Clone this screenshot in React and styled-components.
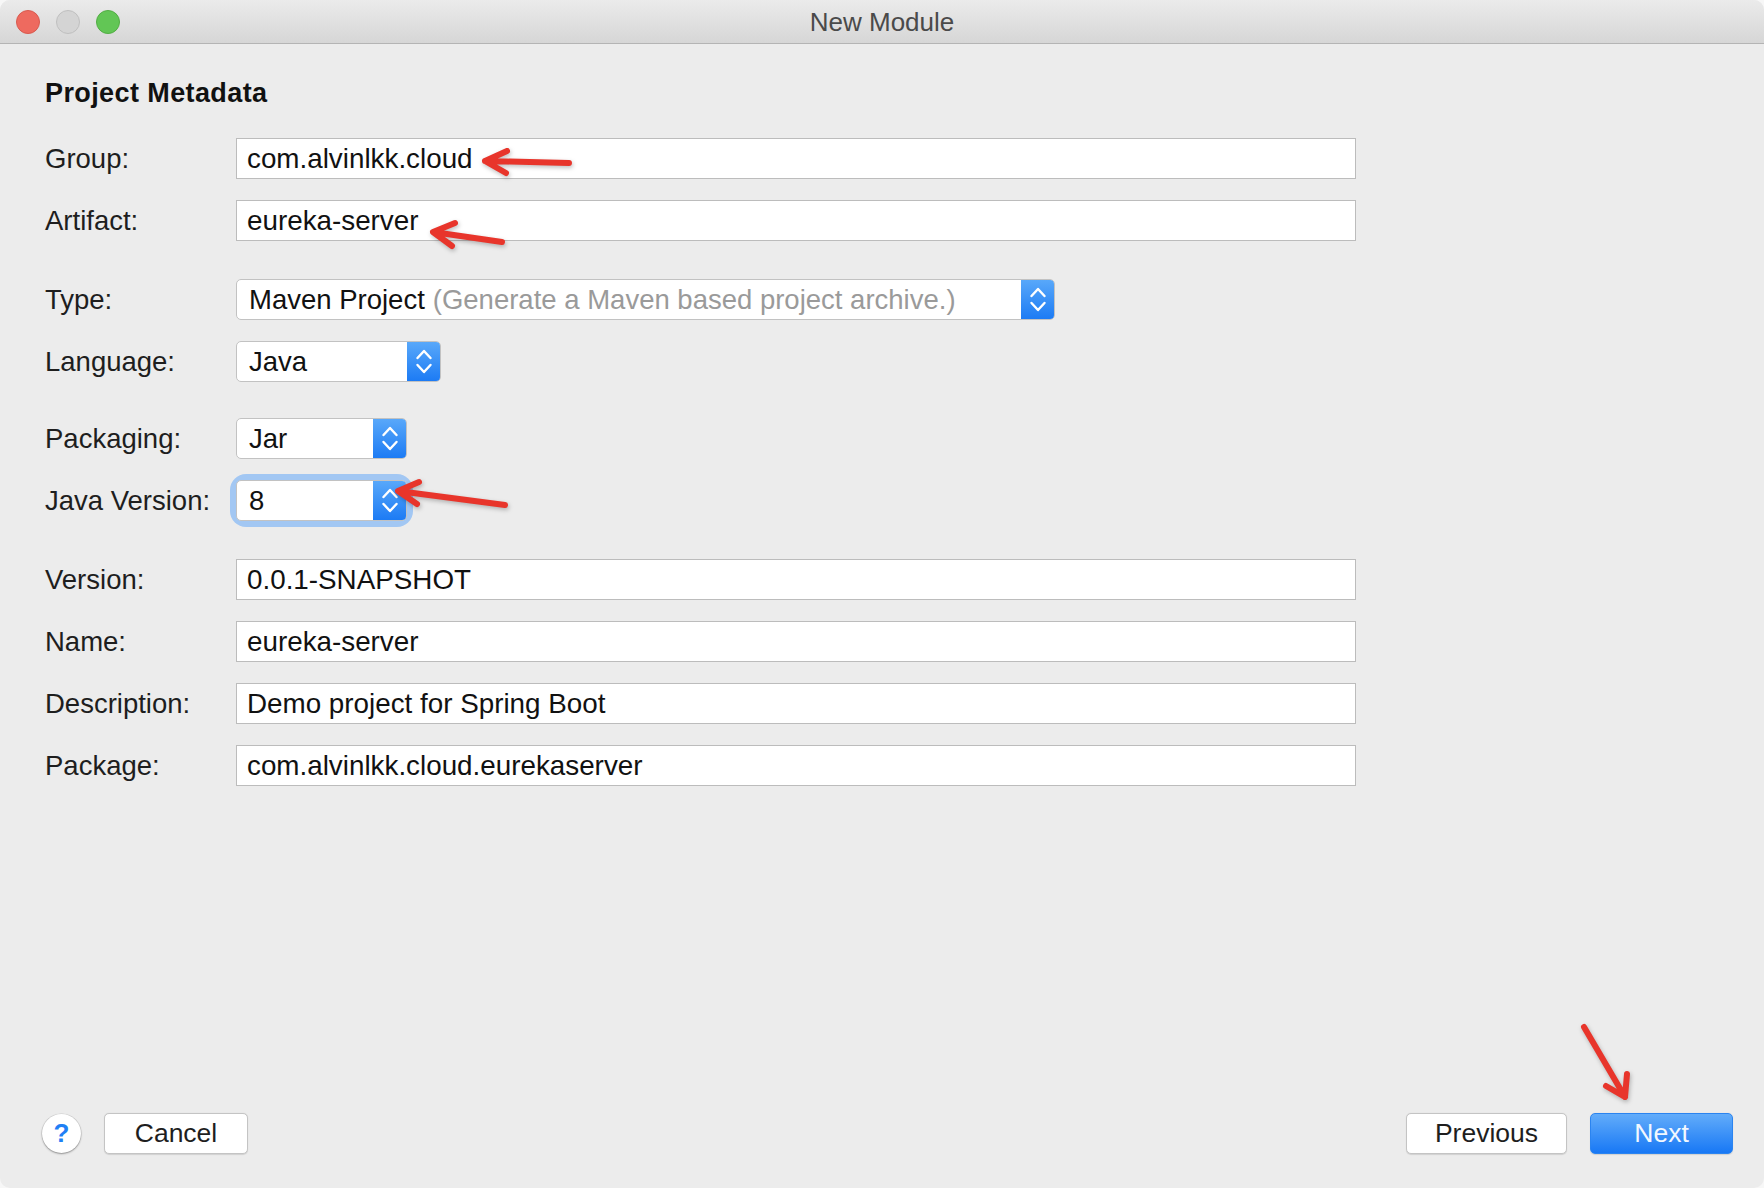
import React from "react";
import styled, { createGlobalStyle } from "styled-components";

const Global = createGlobalStyle`
  html, body, #root { margin: 0; padding: 0; height: 100%; }
  body { background: #f7f7f7; font-family: "Liberation Sans", Arial, sans-serif; overflow: hidden; }
  * { box-sizing: border-box; }
`;

const Window = styled.div`
  position: relative;
  width: 1764px;
  height: 1188px;
  background: #ececec;
  border-radius: 10px;
  overflow: hidden;
  display: flex;
  flex-direction: column;
`;

const TitleBar = styled.div`
  height: 44px;
  flex: 0 0 44px;
  background: linear-gradient(#ebebeb, #d6d6d6);
  border-bottom: 1px solid #b4b4b4;
  display: flex;
  align-items: center;
  position: relative;
  padding-left: 16px;
  gap: 16px;
`;

const Light = styled.span`
  width: 24px;
  height: 24px;
  border-radius: 50%;
  background: ${(p) => p.$bg};
  border: 1px solid ${(p) => p.$border};
`;

const Title = styled.div`
  position: absolute;
  left: 0;
  right: 0;
  top: 0;
  height: 45px;
  display: flex;
  align-items: center;
  justify-content: center;
  font-size: 26px;
  color: #4a4a4a;
  pointer-events: none;
`;

const Content = styled.div`
  flex: 1;
  padding: 32px 0 0 45px;
  display: flex;
  flex-direction: column;
`;

const Heading = styled.h1`
  margin: 0;
  font-size: 27px;
  letter-spacing: 0.4px;
  line-height: 34px;
  font-weight: 700;
  color: #111;
`;

const Form = styled.div`
  margin-top: 28px;
  display: flex;
  flex-direction: column;
`;

const Row = styled.div`
  display: grid;
  grid-template-columns: 191px 1fr;
  align-items: center;
  height: 41px;
  margin-top: ${(p) => (p.$first ? 0 : p.$group ? p.$group : 21)}px;
`;

const Label = styled.label`
  font-size: 27.5px;
  color: #1e1e1e;
  white-space: nowrap;
`;

const TextInput = styled.div`
  width: 1120px;
  height: 41px;
  background: #fff;
  border: 1px solid #bcbcbc;
  display: flex;
  align-items: center;
  padding-left: 10px;
  font-size: 27.8px;
  color: #111;
`;

const SelectWrap = styled.div`
  width: ${(p) => p.$width}px;
  height: 41px;
  border-radius: 10px;
  ${(p) => (p.$focus ? "box-shadow: 0 0 0 6px #a2c7f3;" : "")}
`;

const SelectBox = styled.div`
  width: 100%;
  height: 100%;
  display: flex;
  background: #fff;
  border: 1px solid #c2c2c2;
  border-radius: 5px;
  overflow: hidden;
`;

const SelectValue = styled.div`
  flex: 1;
  display: flex;
  align-items: center;
  padding-left: 12px;
  font-size: 27.5px;
  color: #111;
  white-space: nowrap;
  overflow: hidden;
`;

const Hint = styled.span`
  color: #9a9a9a;
  margin-left: 8px;
`;

const SelectButton = styled.div`
  width: 34px;
  flex: 0 0 34px;
  margin: -1px -1px -1px 0;
  background: linear-gradient(#5aa9fa, #1b7af4);
  display: flex;
  align-items: center;
  justify-content: center;
`;

const Footer = styled.div`
  display: flex;
  align-items: center;
  padding: 0 31px 34px 42px;
  height: 75px;
`;

const HelpButton = styled.div`
  width: 39px;
  height: 39px;
  border-radius: 50%;
  background: #fff;
  box-shadow: 0 1px 2px rgba(0, 0, 0, 0.35), 0 0 0 0.5px rgba(0, 0, 0, 0.12);
  display: flex;
  align-items: center;
  justify-content: center;
  color: #1f80f5;
  font-weight: 700;
  font-size: 26px;
`;

const Button = styled.div`
  width: ${(p) => p.$width}px;
  height: 41px;
  margin-left: ${(p) => p.$ml || 0}px;
  border-radius: 5px;
  display: flex;
  align-items: center;
  justify-content: center;
  font-size: 26.5px;
  color: ${(p) => (p.$primary ? "#f2f8ff" : "#1e1e1e")};
  background: ${(p) =>
    p.$primary ? "linear-gradient(#62acfa, #1878f5)" : "#ffffff"};
  border: 1px solid ${(p) => (p.$primary ? "#2b84f0" : "#c4c4c4")};
  box-shadow: 0 0.5px 1px rgba(0, 0, 0, 0.12);
`;

const Spacer = styled.div`
  flex: 1;
`;

const Overlay = styled.svg`
  position: absolute;
  left: 0;
  top: 0;
  pointer-events: none;
  filter: drop-shadow(1px 2px 2px rgba(0, 0, 0, 0.25));
`;

const Chevrons = () => (
  <svg width="34" height="41" viewBox="0 0 34 41">
    <path
      d="M10.5 17 L17 10 L23.5 17 M10.5 24 L17 31 L23.5 24"
      fill="none"
      stroke="#fff"
      strokeWidth="2.4"
      strokeLinecap="round"
      strokeLinejoin="round"
    />
  </svg>
);

const Select = ({ width, value, hint, focus }) => (
  <SelectWrap $width={width} $focus={focus}>
    <SelectBox>
      <SelectValue>
        {value}
        {hint && <Hint>{hint}</Hint>}
      </SelectValue>
      <SelectButton>
        <Chevrons />
      </SelectButton>
    </SelectBox>
  </SelectWrap>
);

const arrows = [
  "M569 163 L485 161 M507 151 L485 161 L506 173",
  "M502 242 L433 232 M455 223 L433 232 L452 246",
  "M505 505 L398 491 M419 482 L398 491 L417 504",
  "M1584 1027 L1625 1097 M1606 1086 L1625 1097 L1627 1074",
];

export default function App() {
  return (
    <>
      <Global />
      <Window>
        <TitleBar>
          <Light $bg="#ee6a5f" $border="#d85a4f" />
          <Light $bg="#d4d4d4" $border="#bfbfbf" />
          <Light $bg="#62c655" $border="#52ad44" />
          <Title>New Module</Title>
        </TitleBar>
        <Content>
          <Heading>Project Metadata</Heading>
          <Form>
            <Row $first>
              <Label>Group:</Label>
              <TextInput>com.alvinlkk.cloud</TextInput>
            </Row>
            <Row>
              <Label>Artifact:</Label>
              <TextInput>eureka-server</TextInput>
            </Row>
            <Row $group={38}>
              <Label>Type:</Label>
              <Select
                width={819}
                value="Maven Project"
                hint="(Generate a Maven based project archive.)"
              />
            </Row>
            <Row>
              <Label>Language:</Label>
              <Select width={205} value="Java" />
            </Row>
            <Row $group={36}>
              <Label>Packaging:</Label>
              <Select width={171} value="Jar" />
            </Row>
            <Row>
              <Label>Java Version:</Label>
              <Select width={171} value="8" focus />
            </Row>
            <Row $group={38}>
              <Label>Version:</Label>
              <TextInput>0.0.1-SNAPSHOT</TextInput>
            </Row>
            <Row>
              <Label>Name:</Label>
              <TextInput>eureka-server</TextInput>
            </Row>
            <Row>
              <Label>Description:</Label>
              <TextInput>Demo project for Spring Boot</TextInput>
            </Row>
            <Row>
              <Label>Package:</Label>
              <TextInput>com.alvinlkk.cloud.eurekaserver</TextInput>
            </Row>
          </Form>
        </Content>
        <Footer>
          <HelpButton>?</HelpButton>
          <Button $width={144} $ml={23}>
            Cancel
          </Button>
          <Spacer />
          <Button $width={161}>Previous</Button>
          <Button $width={143} $ml={23} $primary>
            Next
          </Button>
        </Footer>
        <Overlay width="1764" height="1188" viewBox="0 0 1764 1188">
          {arrows.map((d, i) => (
            <path
              key={i}
              d={d}
              fill="none"
              stroke="#e8352b"
              strokeWidth="6"
              strokeLinecap="round"
              strokeLinejoin="round"
            />
          ))}
        </Overlay>
      </Window>
    </>
  );
}
